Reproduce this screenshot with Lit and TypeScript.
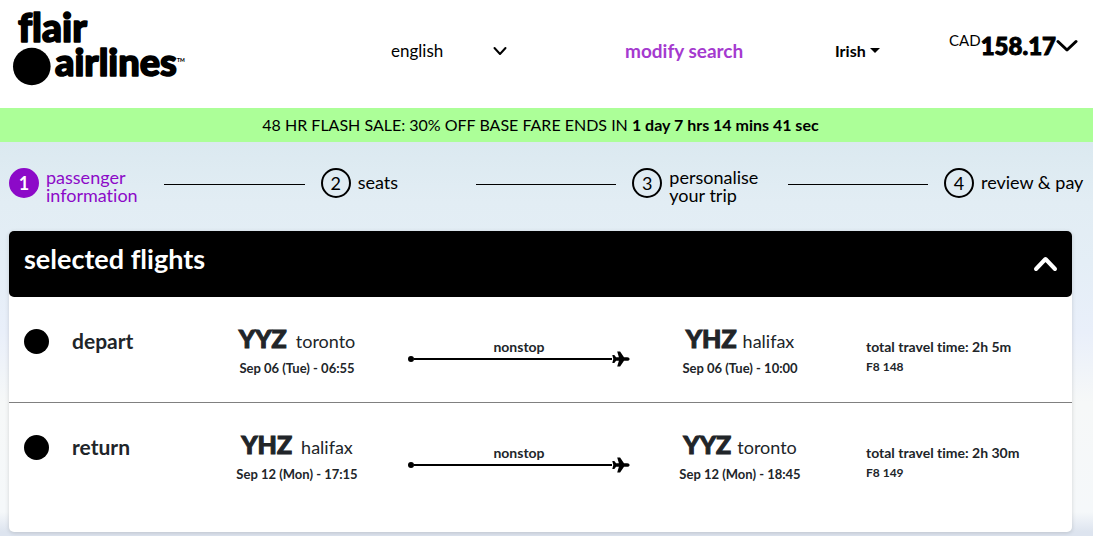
import { LitElement, html, css, svg } from "lit";
import { customElement, property, state } from "lit/decorators.js";
import { classMap } from "lit/directives/class-map.js";

interface Stop {
  code: string;
  city: string;
  time: string;
}

interface Flight {
  label: string;
  from: Stop;
  to: Stop;
  stops: string;
  duration: string;
  number: string;
}

const STEPS = ["passenger information", "seats", "personalise your trip", "review & pay"];

const FLIGHTS: Flight[] = [
  {
    label: "depart",
    from: { code: "YYZ", city: "toronto", time: "Sep 06 (Tue) - 06:55" },
    to: { code: "YHZ", city: "halifax", time: "Sep 06 (Tue) - 10:00" },
    stops: "nonstop",
    duration: "2h 5m",
    number: "F8 148",
  },
  {
    label: "return",
    from: { code: "YHZ", city: "halifax", time: "Sep 12 (Mon) - 17:15" },
    to: { code: "YYZ", city: "toronto", time: "Sep 12 (Mon) - 18:45" },
    stops: "nonstop",
    duration: "2h 30m",
    number: "F8 149",
  },
];

const chevron = (points: string, width: number) => svg`
  <polyline points=${points} fill="none" stroke="currentColor" stroke-width=${width}
    stroke-linecap="round" stroke-linejoin="round"></polyline>`;

@customElement("site-header")
class SiteHeader extends LitElement {
  static styles = css`
    .bar {
      display: grid;
      grid-template-columns:
        minmax(0, 378fr) minmax(0, 234fr) minmax(0, 210fr)
        minmax(0, 117fr) minmax(0, 126fr);
      height: 108px;
      padding: 0 15px 0 13px;
      background: #fff;
      color: #000;
    }
    .logo {
      display: block;
      width: 176px;
      height: 100px;
      overflow: visible;
    }
    .logo text {
      font-family: Lato, "Liberation Sans", sans-serif;
      font-weight: 900;
      font-size: 38px;
      stroke: #000;
      stroke-width: 1.6px;
      stroke-linejoin: round;
    }
    .logo .short {
      font-size: 39px;
    }
    .logo .mark {
      font-size: 5px;
      stroke: none;
    }
    .language {
      display: grid;
      width: 116px;
      height: 24px;
      margin-top: 39px;
      align-items: center;
    }
    .language select,
    .language svg {
      grid-area: 1 / 1;
    }
    .language svg {
      justify-self: end;
      pointer-events: none;
    }
    select,
    button {
      appearance: none;
      border: 0;
      padding: 0;
      margin: 0;
      background: none;
      color: inherit;
      font: inherit;
      cursor: pointer;
    }
    select {
      width: 100%;
      font-size: 17px;
      line-height: 24px;
    }
    .modify {
      justify-self: start;
      align-self: start;
      margin-top: 39px;
      color: #a53acf;
      font-size: 19px;
      font-weight: 700;
      line-height: 24px;
      text-decoration: none;
      white-space: nowrap;
    }
    .account {
      display: flex;
      align-items: center;
      justify-self: start;
      align-self: start;
      gap: 4px;
      margin-top: 39px;
      font-size: 16px;
      font-weight: 700;
      line-height: 24px;
    }
    .caret {
      width: 10px;
      height: 5px;
      margin-bottom: 2px;
    }
    .price {
      display: flex;
      justify-self: end;
      align-self: start;
      align-items: flex-start;
      margin-top: 30px;
    }
    .currency {
      font-size: 15px;
      line-height: 20px;
    }
    .amount {
      font-size: 24px;
      font-weight: 900;
      line-height: 32px;
      -webkit-text-stroke: 1px currentColor;
    }
    .price svg {
      margin-top: 9px;
    }
  `;

  render() {
    return html`
      <header class="bar">
        <svg class="logo" viewBox="0 0 176 100" role="img" aria-label="flair airlines">
          <circle cx="18.8" cy="66.5" r="18.8"></circle>
          <text class="short" x="5" y="42">flair</text>
          <text x="42" y="75.5">airlines</text>
          <text class="mark" x="164" y="62">TM</text>
        </svg>
        <label class="language">
          <select aria-label="language">
            <option>english</option>
          </select>
          <svg width="14" height="10" viewBox="0 0 14 10">${chevron("1.5,2 7,8 12.5,2", 2)}</svg>
        </label>
        <a class="modify" href="#search">modify search</a>
        <button class="account" type="button">
          Irish
          <svg class="caret" viewBox="0 0 10 5"><path d="M0 0h10L5 5z"></path></svg>
        </button>
        <button class="price" type="button">
          <span class="currency">CAD</span><span class="amount">158.17</span>
          <svg width="22" height="14" viewBox="0 0 22 14">${chevron("2,2.5 11,11 20,2.5", 3)}</svg>
        </button>
      </header>
    `;
  }
}

@customElement("step-list")
class StepList extends LitElement {
  @property({ type: Number }) current = 1;

  static styles = css`
    .steps {
      display: grid;
      grid-template-columns: repeat(3, minmax(0, 1fr)) 142px;
      margin: 0;
      padding: 26px 7px 27px 9px;
      list-style: none;
      color: #000;
    }
    .step {
      display: flex;
      align-items: flex-start;
      min-height: 36px;
    }
    .number {
      box-sizing: border-box;
      flex: none;
      width: 30px;
      height: 30px;
      border: 2px solid currentColor;
      border-radius: 50%;
      font-size: 18px;
      line-height: 26px;
      text-align: center;
    }
    .label {
      display: flex;
      flex: 1;
      align-items: center;
      min-height: 28px;
      margin-left: 7px;
      font-size: 18px;
      line-height: 18px;
    }
    .wrap {
      max-width: 106px;
    }
    .line {
      flex: 0 0 45%;
      height: 1px;
      margin: 16px 16px 0 0;
      background: #000;
    }
    .active {
      color: #8c0ac8;
    }
    .active .number {
      border-color: #8c0ac8;
      background: #8c0ac8;
      color: #fff;
      font-weight: 700;
    }
  `;

  render() {
    return html`
      <ol class="steps">
        ${STEPS.map(
          (name, i) => html`
            <li class=${classMap({ step: true, active: i + 1 === this.current })}>
              <span class="number">${i + 1}</span>
              <span class="label"><span class="wrap">${name}</span></span>
              ${i < STEPS.length - 1 ? html`<span class="line"></span>` : null}
            </li>
          `
        )}
      </ol>
    `;
  }
}

@customElement("flight-row")
class FlightRow extends LitElement {
  @property({ attribute: false }) flight!: Flight;

  static styles = css`
    :host {
      display: block;
    }
    .row {
      display: grid;
      grid-template-columns: 48px 137fr 176fr 266fr 178fr 243fr;
      padding: 28px 0 0 15px;
      height: 77px;
      color: #212529;
    }
    .dot {
      width: 25px;
      height: 25px;
      margin-top: 4px;
      border-radius: 50%;
      background: #000;
    }
    .label {
      margin: 4px 0 0;
      font-size: 21px;
      font-weight: 700;
      line-height: 24px;
    }
    .stop {
      text-align: center;
      white-space: nowrap;
    }
    .place {
      display: flex;
      justify-content: center;
      align-items: baseline;
      gap: 6px;
      line-height: 26px;
    }
    .origin .place {
      gap: 9px;
    }
    .code {
      font-size: 25px;
      font-weight: 900;
      -webkit-text-stroke: 1px currentColor;
    }
    .city {
      font-size: 18px;
    }
    .time {
      font-size: 13px;
      font-weight: 700;
      line-height: 28px;
    }
    .route {
      padding: 14px 21px 0 23px;
    }
    .kind {
      display: block;
      font-size: 14px;
      font-weight: 700;
      line-height: 16px;
      text-align: center;
    }
    .track {
      display: flex;
      align-items: center;
      height: 16px;
      margin-top: -4px;
    }
    .track::before {
      content: "";
      width: 6px;
      height: 6px;
      border-radius: 50%;
      background: #000;
    }
    .path {
      flex: 1;
      height: 2px;
      background: #000;
    }
    .info {
      padding: 12px 0 0 37px;
      font-size: 14px;
      font-weight: 700;
      line-height: 20px;
      white-space: nowrap;
    }
    .flight {
      font-size: 12px;
    }
  `;

  private stop(stop: Stop, origin: boolean) {
    return html`
      <div class=${classMap({ stop: true, origin })}>
        <div class="place"><span class="code">${stop.code}</span><span class="city">${stop.city}</span></div>
        <div class="time">${stop.time}</div>
      </div>
    `;
  }

  render() {
    const f = this.flight;
    return html`
      <div class="row">
        <span class="dot"></span>
        <h3 class="label">${f.label}</h3>
        ${this.stop(f.from, true)}
        <div class="route">
          <span class="kind">${f.stops}</span>
          <div class="track">
            <span class="path"></span>
            <svg width="18" height="16" viewBox="0 0 18 16">
              <path
                d="M0.3 4h2l1.8 2.2h2.8L5.2 0.5h2.9l3.9 5.7h3.2c1.5 0 2.4 0.9 2.4 1.8s-0.9 1.8-2.4 1.8H12l-3.9 5.7H5.2l1.7-5.7H4.1L2.3 12h-2l1-4z"
              ></path>
            </svg>
          </div>
        </div>
        ${this.stop(f.to, false)}
        <div class="info">
          <div>total travel time: ${f.duration}</div>
          <div class="flight">${f.number}</div>
        </div>
      </div>
    `;
  }
}

@customElement("selected-flights")
class SelectedFlights extends LitElement {
  @state() private open = true;

  static styles = css`
    .card {
      margin: 0 21px 0 9px;
      border-radius: 5px;
      background: #fff;
      box-shadow: 0 1px 4px rgba(0, 0, 0, 0.15);
    }
    .head {
      display: flex;
      justify-content: space-between;
      width: 100%;
      height: 66px;
      padding: 12px 14px 0 15px;
      border: 0;
      border-radius: 5px;
      background: #000;
      color: #fff;
      font: inherit;
      font-variant-ligatures: none;
      text-align: left;
      cursor: pointer;
    }
    .title {
      margin: 0;
      font-size: 27px;
      font-weight: 700;
      line-height: 32px;
    }
    .head svg {
      margin-top: 12px;
    }
    .flights {
      padding-bottom: 24px;
    }
    .flights flight-row + flight-row {
      border-top: 1px solid #808080;
    }
  `;

  render() {
    return html`
      <section class="card">
        <button
          class="head"
          type="button"
          aria-expanded=${this.open ? "true" : "false"}
          @click=${() => (this.open = !this.open)}
        >
          <span class="title">selected flights</span>
          <svg width="25" height="18" viewBox="0 0 25 18">
            ${chevron(this.open ? "3,14 12.5,4 22,14" : "3,4 12.5,14 22,4", 4)}
          </svg>
        </button>
        ${this.open
          ? html`<div class="flights">${FLIGHTS.map((f) => html`<flight-row .flight=${f}></flight-row>`)}</div>`
          : null}
      </section>
    `;
  }
}

@customElement("app-root")
class AppRoot extends LitElement {
  static styles = css`
    :host {
      display: flex;
      flex-direction: column;
      min-height: 100vh;
      font-family: Lato, "Liberation Sans", sans-serif;
      font-variant-ligatures: none;
      color: #000;
    }
    .sale {
      margin: 0;
      height: 34px;
      padding-right: 12px;
      background: #acff98;
      font-size: 16px;
      line-height: 34px;
      text-align: center;
    }
    .sale strong {
      font-weight: 700;
    }
    .content {
      flex: 1;
      background: linear-gradient(#dbe9f0 0, #e2edf4 60px, #e4eef6 120px, #e9effa 190px, #f6f8f8 260px, #f5f8fa 370px, #dde4ef 390px);
    }
  `;

  render() {
    return html`
      <site-header></site-header>
      <p class="sale">48 HR FLASH SALE: 30% OFF BASE FARE ENDS IN <strong>1 day 7 hrs 14 mins 41 sec</strong></p>
      <main class="content">
        <step-list .current=${1}></step-list>
        <selected-flights></selected-flights>
      </main>
    `;
  }
}
